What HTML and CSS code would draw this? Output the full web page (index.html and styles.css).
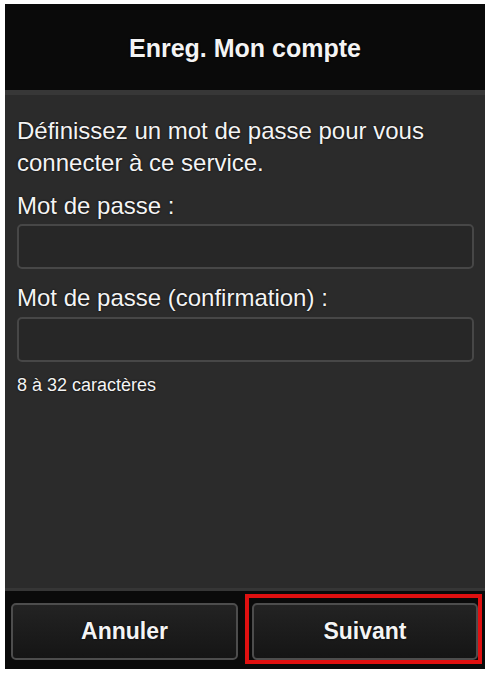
FILE: index.html
```html
<!DOCTYPE html>
<html lang="fr">
<head>
<meta charset="utf-8">
<title>Enreg. Mon compte</title>
<link rel="stylesheet" href="styles.css">
</head>
<body>
<div class="screen">
  <header class="header">
    <h1 class="title">Enreg. Mon compte</h1>
  </header>
  <main class="main">
    <p class="intro">Définissez un mot de passe pour vous connecter à ce service.</p>
    <label class="label" for="pw1">Mot de passe :</label>
    <input class="field" id="pw1" type="password">
    <label class="label label-second" for="pw2">Mot de passe (confirmation) :</label>
    <input class="field" id="pw2" type="password">
    <p class="hint">8 à 32 caractères</p>
  </main>
  <footer class="footer">
    <button class="btn" type="button">Annuler</button>
    <div class="btn-wrap">
      <button class="btn" type="button">Suivant</button>
      <span class="highlight"></span>
    </div>
  </footer>
</div>
</body>
</html>
```
FILE: styles.css
```css
html, body {
  margin: 0;
  padding: 0;
  background: #ffffff;
}

body {
  font-family: "Liberation Sans", Arial, sans-serif;
  color: #f4f4f4;
}

.screen {
  width: 480px;
  height: 665px;
  margin: 4px 0 0 5px;
  display: flex;
  flex-direction: column;
  background: #2b2b2b;
}

.header {
  height: 86px;
  background: #0a0a0a;
  display: flex;
  align-items: center;
  justify-content: center;
  flex: none;
}

.title {
  margin: 0;
  font-size: 25px;
  font-weight: bold;
  line-height: 30px;
  text-shadow: 0 0 2px #000;
  position: relative;
  top: 1px;
}

.main {
  flex: 1;
  border-top: 5px solid #373737;
  padding: 20px 11px 0 12px;
  display: flex;
  flex-direction: column;
  background: #2b2b2b;
}

.intro {
  margin: 0 0 11px;
  font-size: 24px;
  line-height: 32px;
  text-shadow: 0 0 2px #000;
}

.label {
  font-size: 24px;
  line-height: 32px;
  margin-bottom: 2px;
  text-shadow: 0 0 2px #000;
}

.label-second {
  margin-top: 13px;
  margin-bottom: 3px;
}

.field {
  box-sizing: border-box;
  height: 45px;
  width: 100%;
  margin: 0;
  background: #272727;
  border: 2px solid #474747;
  border-radius: 5px;
  outline: none;
}

.hint {
  margin: 11px 0 0;
  font-size: 18px;
  line-height: 24px;
  text-shadow: 0 0 2px #000;
}

.footer {
  flex: none;
  height: 81px;
  box-sizing: border-box;
  border-top: 3px solid #363636;
  background: #0a0a0a;
  padding: 12px 0 9px 6px;
  display: grid;
  grid-template-columns: 227px 226px;
  column-gap: 14px;
  align-items: start;
}

.btn-wrap {
  position: relative;
  display: flex;
}

.btn {
  width: 100%;
  height: 57px;
  margin: 0;
  box-sizing: border-box;
  background: linear-gradient(#232323, #151515);
  border: 2px solid #4d4d4d;
  border-radius: 5px;
  color: #f4f4f4;
  font-family: "Liberation Sans", Arial, sans-serif;
  font-size: 23px;
  font-weight: bold;
  text-shadow: 0 0 2px #000;
}

.highlight {
  position: absolute;
  left: -7px;
  right: -4px;
  top: -9px;
  bottom: -4px;
  border: 4px solid #e01010;
  pointer-events: none;
}
```
